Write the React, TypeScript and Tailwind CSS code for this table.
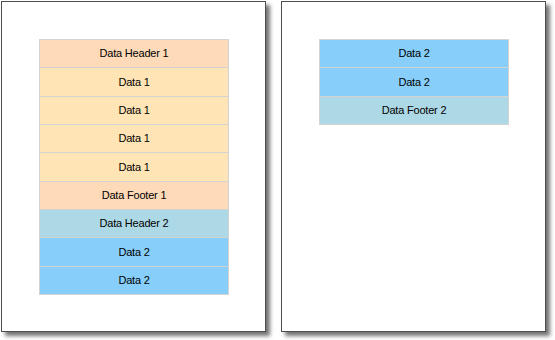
import React from 'react';

type Row = { label: string; bg: string };

const page1: Row[] = [
  { label: 'Data Header 1', bg: 'bg-[#ffdab9]' },
  { label: 'Data 1', bg: 'bg-[#ffe4b5]' },
  { label: 'Data 1', bg: 'bg-[#ffe4b5]' },
  { label: 'Data 1', bg: 'bg-[#ffe4b5]' },
  { label: 'Data 1', bg: 'bg-[#ffe4b5]' },
  { label: 'Data Footer 1', bg: 'bg-[#ffdab9]' },
  { label: 'Data Header 2', bg: 'bg-[#add8e6]' },
  { label: 'Data 2', bg: 'bg-[#87cefa]' },
  { label: 'Data 2', bg: 'bg-[#87cefa]' },
];

const page2: Row[] = [
  { label: 'Data 2', bg: 'bg-[#87cefa]' },
  { label: 'Data 2', bg: 'bg-[#87cefa]' },
  { label: 'Data Footer 2', bg: 'bg-[#add8e6]' },
];

const Page: React.FC<{ rows: Row[] }> = ({ rows }) => (
  <div className="w-[265px] h-[331px] shrink-0 bg-white border border-[#4d4d4d] shadow-[4px_4px_4px_rgba(0,0,0,0.55)] pt-[37px] pl-[37px]">
    <div className="w-[190px] border-t border-x border-[#d3d3d3]">
      {rows.map((row, i) => (
        <div
          key={i}
          className={`${row.bg} h-[28.33px] border-b border-[#d3d3d3] flex items-center justify-center text-[11px] tracking-[-0.2px] text-black`}
        >
          {row.label}
        </div>
      ))}
    </div>
  </div>
);

export default function App() {
  return (
    <div
      className="w-[555px] h-[340px] bg-white pt-px pl-px flex gap-[15px]"
      style={{ fontFamily: '"Liberation Sans", Arial, sans-serif' }}
    >
      <Page rows={page1} />
      <Page rows={page2} />
    </div>
  );
}
